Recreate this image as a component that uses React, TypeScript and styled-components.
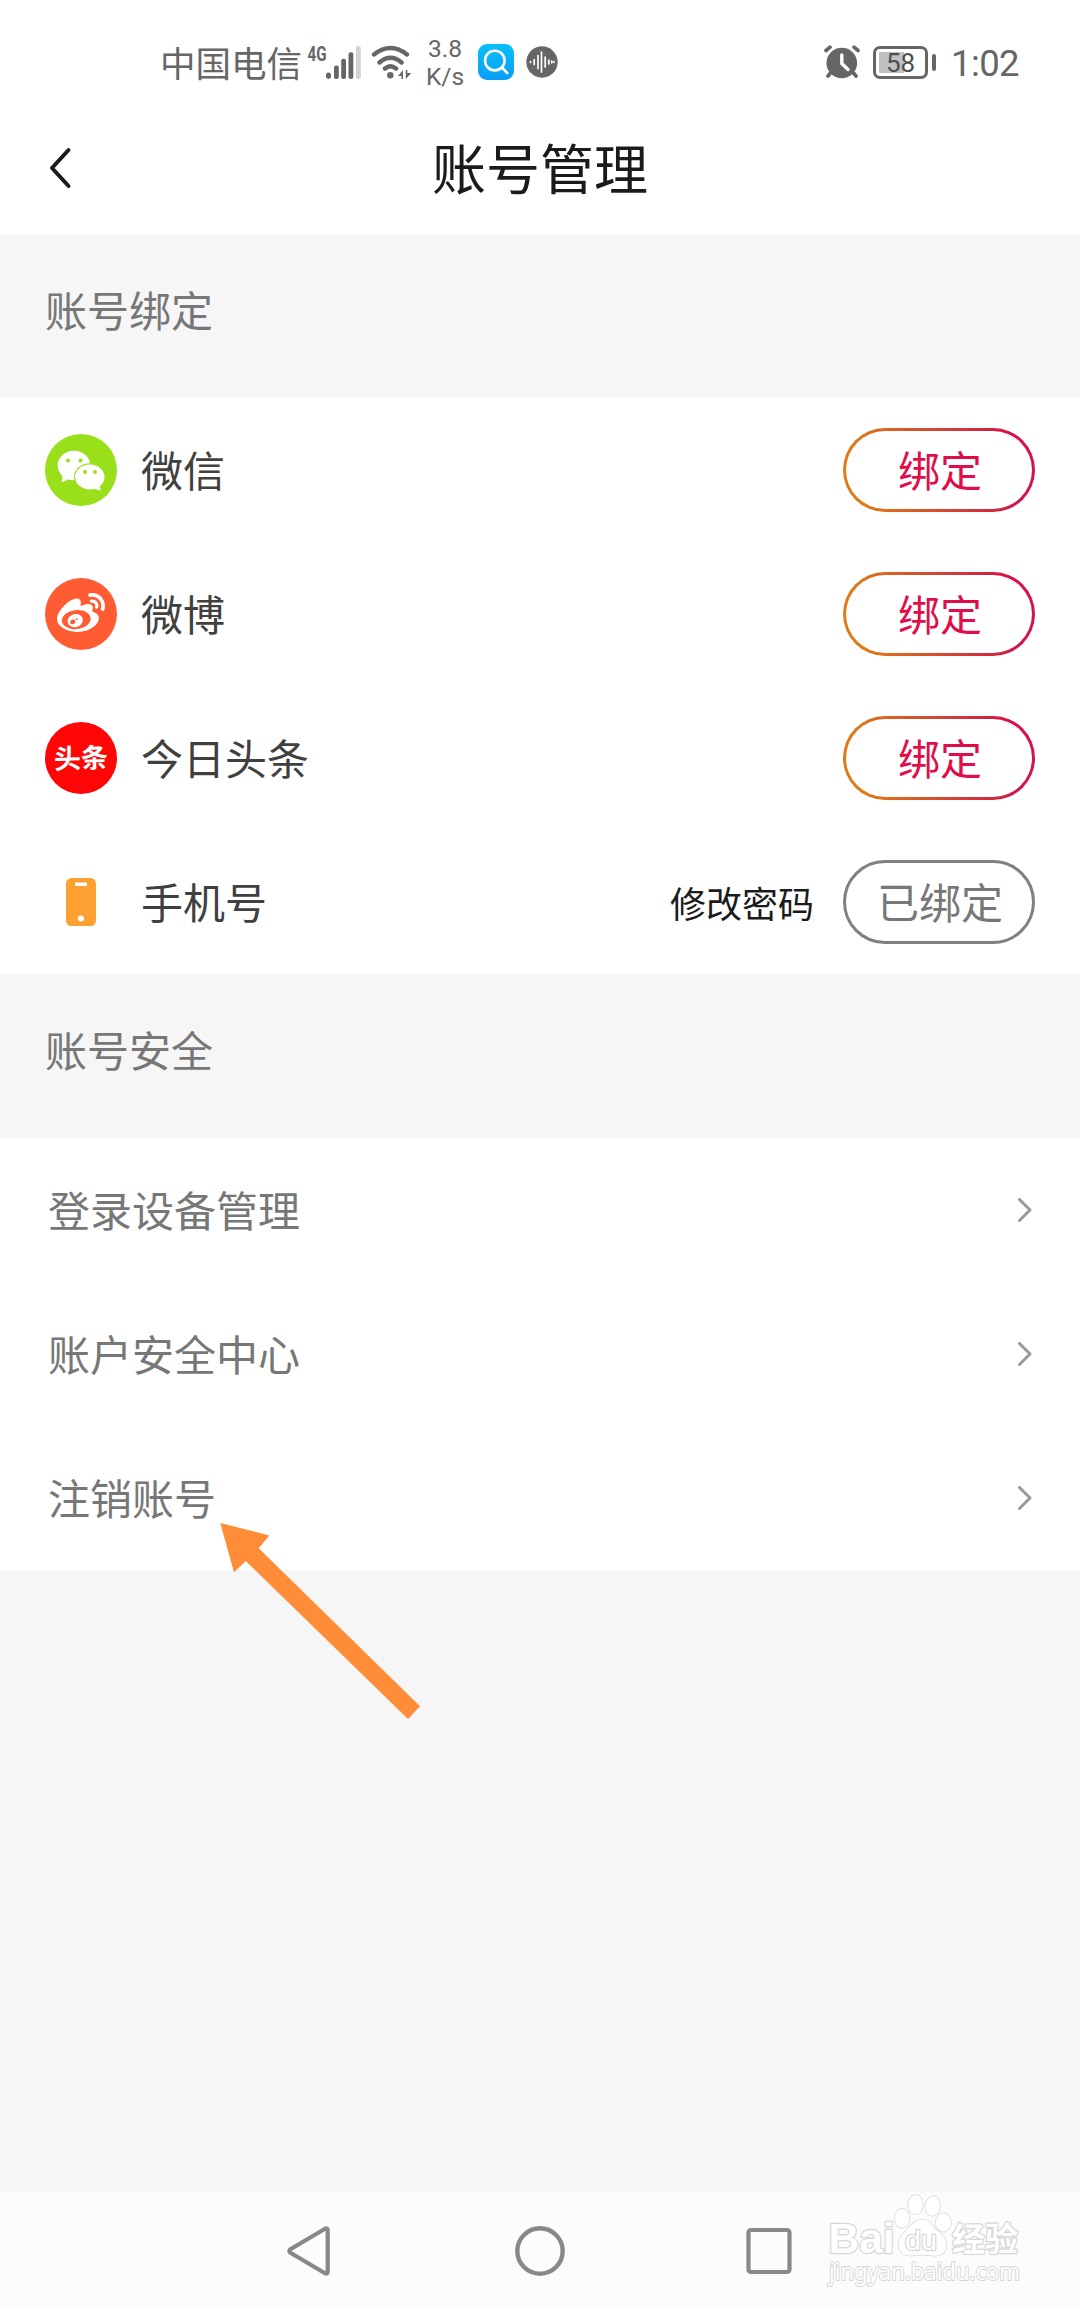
import React from 'react';
import styled, { createGlobalStyle } from 'styled-components';
import { FaWeibo } from 'react-icons/fa';

const GlobalStyle = createGlobalStyle`
  * { box-sizing: border-box; }
  body { margin: 0; background: #f6f6f6; }
`;

const cjk = `"Noto Sans CJK SC", "Noto Sans", sans-serif`;

const Screen = styled.div`
  position: relative;
  display: flex;
  flex-direction: column;
  width: 1080px;
  height: 2310px;
  overflow: hidden;
  background: #f6f6f6;
  font-family: ${cjk};
`;

const StatusBar = styled.header`
  display: flex;
  justify-content: space-between;
  align-items: center;
  height: 102px;
  padding: 22px 61px 0 160px;
  background: #fff;
  color: #666;
`;

const StatusGroup = styled.div`
  display: flex;
  align-items: center;
`;

const Carrier = styled.span`
  width: 145px;
  font-size: 35.5px;
  line-height: 48px;
  white-space: nowrap;
`;

const Speed = styled.span`
  display: flex;
  flex-direction: column;
  align-items: center;
  width: 42px;
  margin: 2px 12px 0 12px;
  font: 400 24.5px/28px Roboto, sans-serif;
`;

const AppBadge = styled.span`
  display: flex;
  align-items: center;
  justify-content: center;
  width: 36px;
  height: 36px;
  margin-right: 12px;
  border-radius: 9px;
  background: linear-gradient(#08c0fa, #0a9cf6);
`;

const Battery = styled.span`
  display: flex;
  align-items: center;
  margin: 0 15px 0 13px;
  &::after {
    content: '';
    width: 4px;
    height: 17px;
    margin-left: 4px;
    border-radius: 2px;
    background: #666;
  }
`;

const BatteryBody = styled.span<{ $level: number }>`
  width: 55px;
  height: 33px;
  padding: 3px;
  border: 3px solid #666;
  border-radius: 7px;
  background: linear-gradient(90deg, #c1c1c1 ${p => p.$level}%, transparent 0) content-box;
  color: #4e4e4e;
  font: 400 26px/22px Roboto, sans-serif;
  text-align: center;
`;

const Clock = styled.span`
  width: 68px;
  font: 400 36.5px/40px Roboto, sans-serif;
  letter-spacing: -0.6px;
  white-space: nowrap;
  padding-top: 4px;
`;

const TitleBar = styled.div`
  display: grid;
  grid-template-columns: 120px 1fr 120px;
  align-items: center;
  height: 132px;
  background: #fff;
`;

const BackButton = styled.button`
  display: flex;
  padding: 0 0 0 48px;
  border: 0;
  background: none;
`;

const Title = styled.h1`
  margin: 0;
  padding-bottom: 2px;
  color: #1b1b1b;
  font-size: 54px;
  font-weight: 400;
  line-height: 80px;
  text-align: center;
`;

const SectionTitle = styled.h2`
  display: flex;
  align-items: center;
  height: 164px;
  margin: 0;
  padding: 0 45px 14px;
  color: #777;
  font-size: 42px;
  font-weight: 400;
  line-height: 60px;
`;

const List = styled.ul`
  margin: 0;
  padding: 0;
  list-style: none;
  background: #fff;
`;

const AccountRow = styled.li`
  display: flex;
  align-items: center;
  height: 144px;
  padding: 0 45px;
`;

const Brand = styled.span<{ $color?: string }>`
  display: flex;
  align-items: center;
  justify-content: center;
  width: 72px;
  height: 72px;
  margin-right: 24px;
  border-radius: 50%;
  background: ${p => p.$color ?? 'transparent'};
  color: #fff;
`;

const ToutiaoMark = styled.span`
  padding-bottom: 2px;
  font-size: 27px;
  font-weight: 700;
  line-height: 36px;
  transform: rotate(-2deg);
`;

const AccountName = styled.span`
  flex: 1;
  padding-bottom: 2px;
  color: #404040;
  font-size: 42px;
  line-height: 60px;
`;

const PasswordLink = styled.a`
  margin-right: 29px;
  padding-bottom: 1px;
  color: #1b1b1b;
  font-size: 36px;
  line-height: 52px;
`;

const BindButton = styled.button<{ $bound?: boolean }>`
  width: 192px;
  height: 84px;
  padding: 0 0 2px 2px;
  border: 3px solid ${p => (p.$bound ? '#808080' : 'transparent')};
  border-radius: 42px;
  background: ${p =>
    p.$bound
      ? '#fff'
      : 'linear-gradient(#fff, #fff) padding-box, linear-gradient(80deg, #e07a18 10%, #d3482f 50%, #d5124b 88%) border-box'};
  color: ${p => (p.$bound ? '#777' : '#e00d48')};
  font-family: ${cjk};
  font-size: 42px;
  line-height: 60px;
`;

const LinkRow = styled.li`
  display: flex;
  align-items: center;
  justify-content: space-between;
  height: 144px;
  padding: 0 48px;
`;

const LinkText = styled.span`
  padding-bottom: 2px;
  color: #777;
  font-size: 42px;
  line-height: 60px;
`;

const NavBar = styled.nav`
  display: flex;
  align-items: center;
  justify-content: center;
  gap: 180px;
  height: 118px;
  margin-top: auto;
  background: #fcfcfc;
`;

const Pointer = styled.svg`
  position: absolute;
  left: 200px;
  top: 1500px;
`;

const Watermark = styled.svg`
  position: absolute;
  left: 820px;
  top: 2190px;
  overflow: visible;
`;

const Signal = () => (
  <svg width="58" height="36" viewBox="305 43 58 36" fill="#666" overflow="visible">
    <text x="307.5" y="59.5" fontFamily="Roboto" fontWeight="700" fontSize="20" textLength="19" lengthAdjust="spacingAndGlyphs">4G</text>
    <rect x="326" y="71.5" width="5" height="6.5" rx="2.4" />
    <rect x="334" y="64.5" width="4.8" height="13.5" rx="2" />
    <rect x="341.2" y="57.7" width="4.8" height="20.3" rx="2" />
    <rect x="348.5" y="51.3" width="4.8" height="26.7" rx="2" />
    <rect x="356" y="45" width="4.8" height="33" rx="2" fill="#d2d2d2" />
  </svg>
);

const Wifi = () => (
  <svg width="49" height="36" viewBox="363 43 49 36" fill="none" stroke="#666" strokeWidth="4.4" strokeLinecap="round">
    <path d="M374 53.5Q390.5 40.500 407 53.500M379.500 61.500Q390.500 52 401.500 61.500M385 67.500Q390.500 63 396 67.500" />
    <circle cx="390.300" cy="74.300" r="3.200" fill="#666" stroke="none" />
    <path d="M403 69v9h-1.500v-3h-3.500zM405.800 78v-9h1.500v3h4z" fill="#666" stroke="none" />
  </svg>
);

const Search = () => (
  <svg width="36" height="36" viewBox="0 0 36 36" fill="none" stroke="#fff" strokeWidth="2.6" strokeLinecap="round">
    <circle cx="16.800" cy="16.600" r="9.800" />
    <path d="M24 23.500l5.300 5.600" />
  </svg>
);

const Audio = () => (
  <svg width="32" height="32" viewBox="0 0 32 32">
    <circle cx="16" cy="16" r="15.700" fill="#666" />
    <path d="M4.500 15.500v1M8.200 13.500v5M12 9.500v13M15.500 6v20M19.200 11v10M22.800 14v4M25.800 15.200v1.600M28 15.700v.6" stroke="#fff" strokeWidth="1.700" strokeLinecap="round" />
  </svg>
);

const Alarm = () => (
  <svg width="36" height="34" viewBox="0 0 36 34" fill="none" stroke="#666" strokeLinecap="round">
    <circle cx="17.800" cy="18" r="15.300" fill="#666" stroke="none" />
    <path d="M2 5.500L6 2.200M34 5.500L30 2.200M6.500 28l-2.500 3M29.500 28l2.500 3" strokeWidth="3.600" />
    <path d="M17.800 10v8.500l6.200 6" stroke="#fff" strokeWidth="3.400" />
  </svg>
);

const Wechat = () => (
  <svg width="72" height="72" viewBox="0 0 72 72" fill="#fff">
    <path d="M17.500 41l-.7 7.500 8-4z" />
    <ellipse cx="29" cy="31.500" rx="16.300" ry="14.800" />
    <ellipse cx="44.800" cy="43" rx="15.800" ry="13.700" fill="#99e01a" />
    <ellipse cx="44.800" cy="43" rx="14.700" ry="12.500" />
    <path d="M48 54.500l8 2.200-1.500-6z" />
    <g fill="#99e01a">
      <circle cx="23" cy="26.500" r="2.100" />
      <circle cx="35.500" cy="26.500" r="2.100" />
      <circle cx="40" cy="38" r="1.900" />
      <circle cx="50" cy="38" r="1.900" />
    </g>
  </svg>
);

const Phone = () => (
  <svg width="30" height="48" viewBox="0 0 30 48">
    <rect width="30" height="48" rx="5.500" fill="#ffa032" />
    <rect x="9" y="4.500" width="12" height="3.500" rx="1" fill="#fff" />
    <circle cx="15" cy="40.500" r="3" fill="#fff" />
  </svg>
);

const Chevron = () => (
  <svg width="18" height="28" viewBox="0 0 18 28" fill="none" stroke="#999" strokeWidth="3" strokeLinecap="round" strokeLinejoin="round">
    <path d="M5.500 3.500L16 14 5.500 24.500" />
  </svg>
);

const BaiduMark = () => (
  <Watermark width="210" height="120" viewBox="820 2190 210 120" fill="#fff" stroke="#d6d6d6" strokeWidth="2.4" paintOrder="stroke" strokeLinejoin="round">
    <text x="828.500" y="2253" fontFamily="Liberation Sans" fontWeight="700" fontSize="43" textLength="66" lengthAdjust="spacingAndGlyphs">Bai</text>
    <g strokeWidth="1.500">
      <ellipse cx="902" cy="2218.300" rx="7.500" ry="9.500" />
      <ellipse cx="915.500" cy="2204.700" rx="7.300" ry="9.800" />
      <ellipse cx="932.700" cy="2206" rx="7.300" ry="9.800" transform="rotate(8 932.700 2206)" />
      <ellipse cx="943.300" cy="2222.500" rx="7.500" ry="9.300" />
      <path d="M922 2219.500C930 2219.500 933 2227 938 2231.500C944 2236 947 2241 946.500 2246C945.500 2254 940 2256.500 932 2255.500C925 2254.500 920 2254.500 913 2255.500C904 2256.500 899 2252 898.500 2245C898 2239 902 2235 906 2231C911 2226 914 2219.500 922 2219.500Z" />
    </g>
    <text x="905" y="2250" fontFamily="Liberation Sans" fontWeight="400" fontSize="28" textLength="32" lengthAdjust="spacingAndGlyphs">du</text>
    <text x="952" y="2251" fontFamily="Noto Sans CJK SC" fontWeight="700" fontSize="33">经验</text>
    <text x="829" y="2280" fontFamily="Noto Sans" fontSize="24" strokeWidth="2" textLength="191" lengthAdjust="spacingAndGlyphs">jingyan.baidu.com</text>
  </Watermark>
);

const accounts = [
  { name: '微信', icon: <Wechat />, color: '#99e01a' },
  { name: '微博', icon: <FaWeibo size={48} />, color: '#ff5c33' },
  { name: '今日头条', icon: <ToutiaoMark>头条</ToutiaoMark>, color: '#ff0606' },
  { name: '手机号', icon: <Phone />, bound: true },
];

const links = ['登录设备管理', '账户安全中心', '注销账号'];

export default function App() {
  return (
    <Screen>
      <GlobalStyle />
      <StatusBar>
        <StatusGroup>
          <Carrier>中国电信</Carrier>
          <Signal />
          <Wifi />
          <Speed>
            <span>3.8</span>
            <span>K/s</span>
          </Speed>
          <AppBadge><Search /></AppBadge>
          <Audio />
        </StatusGroup>
        <StatusGroup>
          <Alarm />
          <Battery><BatteryBody $level={58}>58</BatteryBody></Battery>
          <Clock>1:02</Clock>
        </StatusGroup>
      </StatusBar>
      <TitleBar>
        <BackButton aria-label="返回">
          <svg width="24" height="44" viewBox="0 0 24 44" fill="none" stroke="#1b1b1b" strokeWidth="4" strokeLinecap="round" strokeLinejoin="round">
            <path d="M20.500 4L4 22l16.500 18" />
          </svg>
        </BackButton>
        <Title>账号管理</Title>
      </TitleBar>

      <SectionTitle>账号绑定</SectionTitle>
      <List>
        {accounts.map(a => (
          <AccountRow key={a.name}>
            <Brand $color={a.color}>{a.icon}</Brand>
            <AccountName>{a.name}</AccountName>
            {a.bound && <PasswordLink>修改密码</PasswordLink>}
            <BindButton $bound={a.bound}>{a.bound ? '已绑定' : '绑定'}</BindButton>
          </AccountRow>
        ))}
      </List>

      <SectionTitle>账号安全</SectionTitle>
      <List>
        {links.map(text => (
          <LinkRow key={text}>
            <LinkText>{text}</LinkText>
            <Chevron />
          </LinkRow>
        ))}
      </List>

      <NavBar>
        <svg width="50" height="50" viewBox="0 0 50 50" fill="none" stroke="#888" strokeWidth="4.200" strokeLinejoin="round">
          <path d="M5 23.500Q3.800 25 5 26.500L40 47.300Q42.700 48.300 42.700 46V4Q42.700 1.700 40 2.700Z" />
        </svg>
        <svg width="50" height="50" viewBox="0 0 50 50" fill="none" stroke="#888" strokeWidth="4.400">
          <circle cx="25" cy="25" r="22.700" />
        </svg>
        <svg width="50" height="50" viewBox="0 0 50 50" fill="none" stroke="#888" strokeWidth="4.200">
          <rect x="3.500" y="4" width="41" height="42" rx="2.500" />
        </svg>
      </NavBar>

      <Pointer width="230" height="230" viewBox="0 0 230 230" fill="#ff8c37">
        <path d="M20.300 23L69.300 35.500 58.700 48.300 220 206.300 208 219 45.700 61 34 72.300z" />
      </Pointer>
      <BaiduMark />
    </Screen>
  );
}
